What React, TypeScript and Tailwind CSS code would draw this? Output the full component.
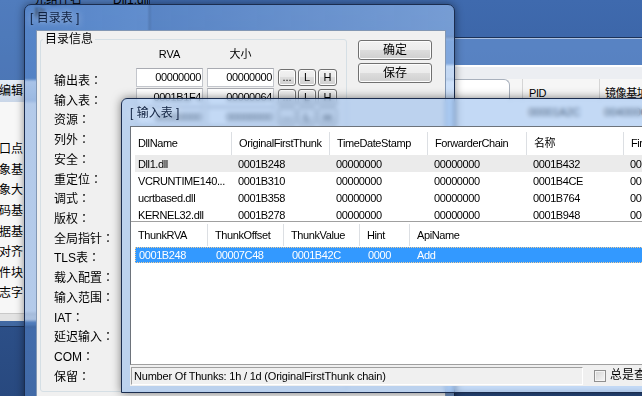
import React from "react";

const ui = "font-['Liberation_Sans','Noto_Sans_CJK_SC',sans-serif]";

const leftLabels = ["入口点", "映象基址", "映象大小", "代码基址", "数据基址", "块对齐", "文件块对齐", "标志字"];

const dirRows: [string, string, string][] = [
	["输出表", "00000000", "00000000"],
	["输入表", "0001B1F4", "00000064"],
	["资源", "00000000", "00000000"],
	["列外", "00000000", "00000000"],
	["安全", "00000000", "00000000"],
	["重定位", "00000000", "00000000"],
	["调式", "00019E40", "00000038"],
	["版权", "00000000", "00000000"],
	["全局指针", "00000000", "00000000"],
	["TLS表", "00000000", "00000000"],
	["载入配置", "00000000", "00000000"],
	["输入范围", "00000000", "00000000"],
	["IAT", "0001B000", "000001F0"],
	["延迟输入", "00000000", "00000000"],
	["COM", "00000000", "00000000"],
	["保留", "00000000", "00000000"],
];

const dllCols = ["DllName", "OriginalFirstThunk", "TimeDateStamp", "ForwarderChain", "名称", "FirstThunk"];
const dllHeadW = ["w-[100px]", "w-[98px]", "w-[98px]", "w-[99px]", "w-[97px]", "w-[100px]"];
const dllRowW = ["w-[96px] pl-[3px]", "w-[98px] pl-[7px]", "w-[98px] pl-[7px]", "w-[99px] pl-[7px]", "w-[97px] pl-[7px]", "w-[100px] pl-[7px]"];
const dllRows = [
	["Dll1.dll", "0001B248", "00000000", "00000000", "0001B432", "0001B000"],
	["VCRUNTIME140...", "0001B310", "00000000", "00000000", "0001B4CE", "0001B0C8"],
	["ucrtbased.dll", "0001B358", "00000000", "00000000", "0001B764", "0001B110"],
	["KERNEL32.dll", "0001B278", "00000000", "00000000", "0001B948", "0001B030"],
];

const thunkCols = ["ThunkRVA", "ThunkOffset", "ThunkValue", "Hint", "ApiName"];
const thunkHeadW = ["w-[76px]", "w-[76px]", "w-[76px]", "w-[50px]", "w-[200px]"];
const thunkRowW = ["w-[72px] pl-[3px]", "w-[76px] pl-[8px]", "w-[76px] pl-[8px]", "w-[50px] pl-[8px]", "w-[200px] pl-[7px]"];
const thunkRow = ["0001B248", "00007C48", "0001B42C", "0000", "Add"];

function WinButton({ children, className = "" }: { children: React.ReactNode; className?: string }) {
	return (
		<div
			className={`flex items-center justify-center rounded-[3px] border border-[#707070] bg-[linear-gradient(#f2f2f2,#ebebeb_50%,#dddddd_50%,#cfcfcf)] shadow-[inset_0_0_0_1px_#fcfcfc] text-black ${className}`}
		>
			{children}
		</div>
	);
}

function LeftBackWindow() {
	return (
		<div className="absolute left-[-120px] top-[-30px] flex h-[357px] w-[270px] flex-col rounded-[6px] border border-[#1c3258] bg-[rgba(120,165,225,0.3)]">
			<div className="flex h-[109px] items-start gap-[24px] pl-[153px] pt-[22px] text-[12px] leading-[14px] text-black">
				<span>元组件名称</span>
				<span>Dll1.dll</span>
			</div>
			<div className="mx-[8px] flex h-[22px] items-center bg-gradient-to-b from-[#e6edf6] to-[#c9d6e8] pl-[110px] text-[12px] text-black">
				<span>编辑</span>
			</div>
			<div className="mx-[8px] flex flex-1 flex-col bg-[#f7f7f7] pl-[98px] pt-[37px] text-[12px] text-black">
				<div className="flex w-[36px] flex-col overflow-hidden">
					{leftLabels.map((l) => (
						<div key={l} className="flex h-[20.57px] shrink-0 items-center whitespace-nowrap">
							{l}
						</div>
					))}
				</div>
			</div>
			<div className="mx-[8px] mb-[5px] h-[8px] border-t border-[#c9c9c9] bg-[#e3e3e3]" />
		</div>
	);
}

function RightBackWindow() {
	return (
		<div className="absolute left-[400px] top-[37px] flex h-[356px] w-[262px] flex-col rounded-t-[6px] border border-[#1c3258] bg-[rgba(130,175,235,0.4)]">
			<div className="h-[27px] border-t border-[rgba(255,255,255,0.5)]" />
			<div className="mx-[8px] flex flex-1 flex-col bg-white">
				<div className="h-[2px] bg-white" />
				<div className="h-[12px] bg-[#eceef2]" />
				<div className={`flex h-[21px] bg-[#f6f6f6] text-[11px] tracking-[-0.4px] text-black ${ui}`}>
					<div className="w-[101px] rounded-tr-[6px] border-r border-t border-[#a9b1bd] bg-white" />
					<div className="w-[12px]" />
					<div className="flex w-[77px] items-end border-l border-[#d5d5d5] pl-[6px] leading-[14px]">PID</div>
					<div className="flex flex-1 items-end border-l border-[#d5d5d5] pl-[5px] leading-[14px]">镜像基址</div>
				</div>
				<div className="flex h-[24px] items-center text-[11px] text-black">
					<div className="w-[113px]" />
					<div className="w-[77px] pl-[7px]">00001A2C</div>
					<div className="pl-[6px]">00400000</div>
				</div>
			</div>
		</div>
	);
}

function DirectoryWindow() {
	return (
		<div className="absolute left-[24px] top-[4px] flex h-[400px] w-[431px] flex-col rounded-t-[7px] border border-[#1b2d4f] bg-gradient-to-r from-[rgba(95,145,215,0.45)] to-[rgba(165,200,245,0.55)] shadow-[0_0_8px_rgba(0,0,0,0.45)] backdrop-blur-[1px]">
			<div className="flex h-[25px] items-center pl-[5px] text-[12px] text-[#0f2140] [text-shadow:0_0_6px_rgba(255,255,255,0.7)]">
				[ 目录表 ]
			</div>
			<div className="ml-[11px] mr-[8px] flex flex-1 gap-[11px] border border-[#8297b4] bg-[#f0f0f0] pl-[3px]">
				<fieldset className="h-[361px] w-[307px] shrink-0 rounded-[3px] border border-[#d5dfe5]">
					<legend className="ml-[2px] px-[2px] text-[12px] leading-[16px] text-black">目录信息</legend>
					<div className="flex h-[14px] items-center pl-[95px] text-[11px] text-black">
						<div className="w-[67px] text-center">RVA</div>
						<div className="ml-[4px] w-[67px] text-center">大小</div>
					</div>
					<div className="mt-[7px] flex flex-col pl-[13px]">
						{dirRows.map(([name, rva, size]) => (
							<div key={name} className="flex h-[19.73px] shrink-0 items-start">
								<div className="mt-[4px] w-[82px] whitespace-nowrap text-[12px] leading-[16px] text-black">
									{name}
									<span className="font-['Noto_Sans_CJK_TC',sans-serif]">：</span>
								</div>
								<div className="flex h-[19px] w-[67px] items-center justify-end border border-[#c3c6cc] border-t-[#a9abb2] bg-white pr-[1px] text-[11px] tracking-[-0.4px] text-black">
									{rva}
								</div>
								<div className="ml-[4px] flex h-[19px] w-[67px] items-center justify-end border border-[#c3c6cc] border-t-[#a9abb2] bg-white pr-[1px] text-[11px] tracking-[-0.4px] text-black">
									{size}
								</div>
								<WinButton className="ml-[4px] mt-[1px] h-[17px] w-[18px] text-[11px] leading-[11px]">...</WinButton>
								<WinButton className="ml-[2px] mt-[1px] h-[17px] w-[18px] text-[11px]">L</WinButton>
								<WinButton className="ml-[2px] mt-[1px] h-[17px] w-[19px] text-[11px]">H</WinButton>
							</div>
						))}
					</div>
				</fieldset>
				<div className="mt-[9px] flex w-[74px] flex-col gap-[3px] text-[12px]">
					<WinButton className="h-[20px]">确定</WinButton>
					<WinButton className="h-[20px]">保存</WinButton>
				</div>
			</div>
		</div>
	);
}

function ImportWindow() {
	return (
		<div className="absolute left-[121px] top-[98px] flex h-[295px] w-[540px] flex-col rounded-t-[6px] border border-[#1b2d4f] bg-[rgba(135,180,235,0.5)] shadow-[0_0_10px_rgba(0,0,0,0.5)] backdrop-blur-[2px]">
			<div className="flex h-[27px] items-center pl-[8px] text-[12px] text-[#0f2140] [text-shadow:0_0_6px_rgba(255,255,255,0.7)]">
				[ 输入表 ]
			</div>
			<div className="mb-[6px] ml-[8px] flex flex-1 flex-col bg-[#f0f0f0]">
				<div className="flex flex-1 flex-col overflow-hidden border-b border-l border-t border-[#6d737b] border-b-[#a0a0a0] bg-white text-[11px] tracking-[-0.4px] text-black">
					{/* dll list */}
					<div className="flex h-[28px] shrink-0 pt-[5px]">
						{dllCols.map((c, i) => (
							<div
								key={c}
								className={`flex shrink-0 items-center whitespace-nowrap pl-[7px] ${dllHeadW[i]} ${i > 0 ? "border-l border-[#dcdfe3] pl-[6px]" : ""}`}
							>
								{c}
							</div>
						))}
					</div>
					<div className="flex h-[67px] shrink-0 flex-col overflow-hidden border-b border-[#a0a0a0]">
						{dllRows.map((r, ri) => (
							<div
								key={r[0]}
								className={`ml-[4px] flex h-[17px] shrink-0 items-center pt-[2px] ${ri === 0 ? "bg-[#ebebeb]" : ""}`}
							>
								{r.map((v, i) => (
									<div key={i} className={`shrink-0 whitespace-nowrap ${dllRowW[i]}`}>
										{v}
									</div>
								))}
							</div>
						))}
					</div>
					{/* thunk list */}
					<div className="flex h-[24px] shrink-0 pt-[2px]">
						{thunkCols.map((c, i) => (
							<div
								key={c}
								className={`flex shrink-0 items-center whitespace-nowrap pl-[7px] ${thunkHeadW[i]} ${i > 0 ? "border-l border-[#dcdfe3]" : ""}`}
							>
								{c}
							</div>
						))}
					</div>
					<div className="ml-[4px] mt-[1px] flex h-[16px] shrink-0 items-center border border-dotted border-[#f3cf9a] bg-[#3399ff] pt-[1px] text-white">
						{thunkRow.map((v, i) => (
							<div key={i} className={`shrink-0 whitespace-nowrap ${thunkRowW[i]} ${i === 0 ? "pl-[2px]" : ""}`}>
								{v}
							</div>
						))}
					</div>
				</div>
				<div className="flex h-[21px] shrink-0 items-start">
					<div className="ml-[1px] mt-[2px] flex h-[18px] w-[452px] items-center border border-b-white border-l-[#a0a0a0] border-r-white border-t-[#a0a0a0] pl-[2px] text-[11px] tracking-[-0.2px] text-black">
						Number Of Thunks: 1h / 1d (OriginalFirstThunk chain)
					</div>
					<div className="ml-[11px] mt-[5px] h-[12px] w-[12px] border border-[#8f8f8f] bg-gradient-to-br from-[#d4d4d4] to-[#f7f7f7] shadow-[inset_0_0_0_1px_#f4f4f4]" />
					<div className="ml-[4px] mt-[2px] whitespace-nowrap text-[12px] leading-[17px] text-black">总是查看</div>
				</div>
			</div>
		</div>
	);
}

export default function App() {
	return (
		<div className={`relative h-[396px] w-[642px] overflow-hidden bg-gradient-to-b from-[#3f6aae] to-[#28497f] ${ui}`}>
			<LeftBackWindow />
			<RightBackWindow />
			<DirectoryWindow />
			<ImportWindow />
		</div>
	);
}
